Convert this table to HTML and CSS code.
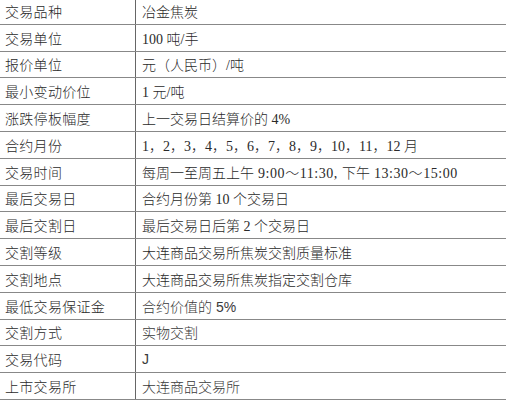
FILE: index.html
```html
<!DOCTYPE html>
<html lang="zh-CN">
<head>
<meta charset="utf-8">
<title>冶金焦炭合约</title>
<link rel="stylesheet" href="styles.css">
</head>
<body>
<div class="spec">
  <div class="row"><div class="k">交易品种</div><div class="v">冶金焦炭</div></div>
  <div class="row"><div class="k">交易单位</div><div class="v">100 吨/手</div></div>
  <div class="row"><div class="k">报价单位</div><div class="v">元（人民币）/吨</div></div>
  <div class="row"><div class="k">最小变动价位</div><div class="v">1 元/吨</div></div>
  <div class="row"><div class="k">涨跌停板幅度</div><div class="v">上一交易日结算价的 4%</div></div>
  <div class="row"><div class="k">合约月份</div><div class="v">1，2，3，4，5，6，7，8，9，10，11，12 月</div></div>
  <div class="row"><div class="k">交易时间</div><div class="v">每周一至周五上午<span class="wide"> 9:00～11:30, </span>下午<span class="wide"> 13:30～15:00</span></div></div>
  <div class="row"><div class="k">最后交易日</div><div class="v">合约月份第 10 个交易日</div></div>
  <div class="row"><div class="k">最后交割日</div><div class="v">最后交易日后第 2 个交易日</div></div>
  <div class="row"><div class="k">交割等级</div><div class="v">大连商品交易所焦炭交割质量标准</div></div>
  <div class="row"><div class="k">交割地点</div><div class="v">大连商品交易所焦炭指定交割仓库</div></div>
  <div class="row"><div class="k">最低交易保证金</div><div class="v sans">合约价值的 5%</div></div>
  <div class="row"><div class="k">交割方式</div><div class="v sans">实物交割</div></div>
  <div class="row"><div class="k">交易代码</div><div class="v sans">J</div></div>
  <div class="row"><div class="k">上市交易所</div><div class="v sans">大连商品交易所</div></div>
</div>
</body>
</html>
```

FILE: styles.css
```css
html, body {
  margin: 0;
  padding: 0;
  background: #fff;
  overflow: hidden;
}
.spec {
  margin-top: -2px;
  width: 506px;
  font-family: "Liberation Serif", "Noto Sans CJK SC", serif;
  font-size: 14px;
  color: #2a2a2a;
}
.row {
  display: grid;
  grid-template-columns: 136px 1fr;
  height: 26.8px;
  box-sizing: border-box;
  border-bottom: 1px solid #888;
}
.k, .v {
  display: flex;
  align-items: center;
  white-space: pre;
}
.k {
  padding-left: 5px;
  border-right: 1px solid #666;
  font-family: "Noto Sans CJK SC", sans-serif;
  font-weight: 300;
  letter-spacing: 0.3px;
}
.v {
  padding-left: 6px;
  font-weight: 300;
}
.v.sans {
  font-family: "Liberation Sans", "Noto Sans CJK SC", sans-serif;
  color: #3a3a3a;
}
.wide {
  letter-spacing: 0.55px;
}
```
